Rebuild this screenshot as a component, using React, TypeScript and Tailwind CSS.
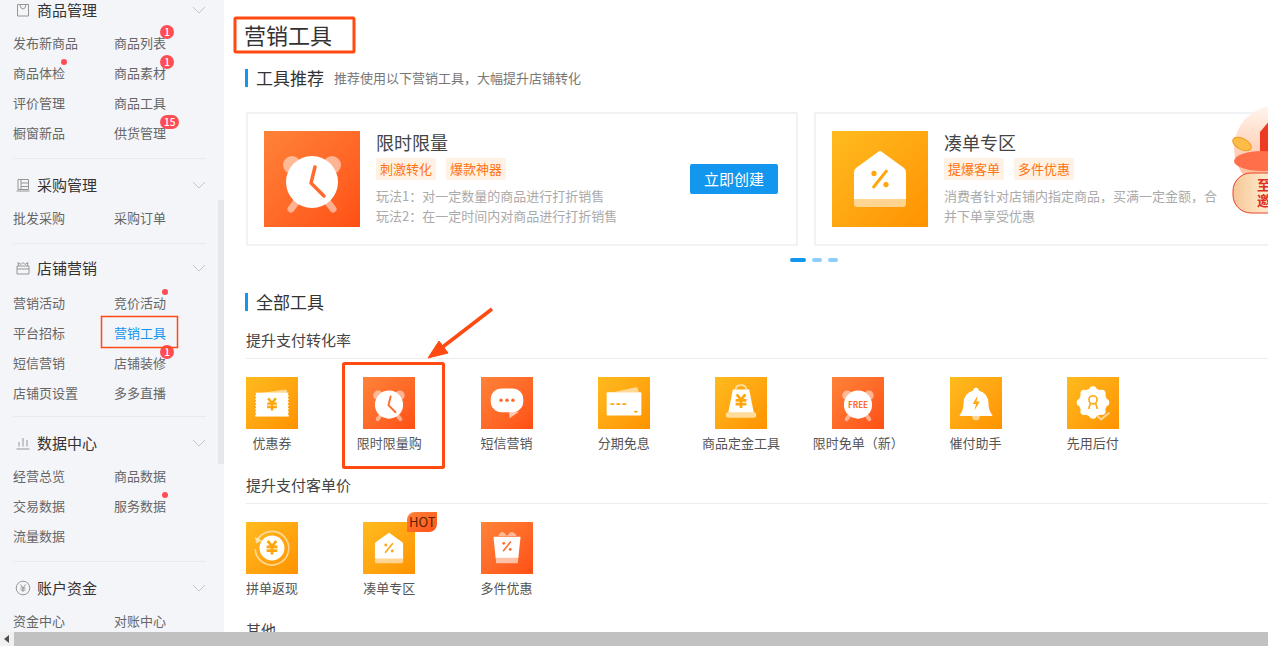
const RED_TILE = "bg-linear-to-br from-[#ff8238] to-[#ff4f14]";
const YELLOW_TILE = "bg-linear-to-br from-[#ffbb1e] to-[#ff9200]";
const RED = "#ff6a2d";
const YELLOW = "#ffa60e";
const PALE = "#ffffff";

type Mark = { badge?: string; dot?: boolean };
type NavItem = Mark & { label: string; active?: boolean };

function Yen({ cx, cy, s, color }: { cx: number; cy: number; s: number; color: string }) {
  return (
    <path
      d={`M${cx - s * 0.8} ${cy - s * 1.2}L${cx} ${cy - s * 0.2}L${cx + s * 0.8} ${cy - s * 1.2}M${cx - s} ${cy - s * 0.1}H${cx + s}M${cx - s} ${cy + s * 0.6}H${cx + s}M${cx} ${cy - s * 0.1}V${cy + s * 1.3}`}
      fill="none"
      stroke={color}
      strokeWidth={s * 0.5}
    />
  );
}

function Percent({ x, y, s, color }: { x: number; y: number; s: number; color: string }) {
  return (
    <g fill={color}>
      <path d={`M${x + s * 0.8} ${y - s}L${x - s * 0.8} ${y + s}`} stroke={color} strokeWidth={s * 0.36} strokeLinecap="round" />
      <circle cx={x - s * 0.75} cy={y - s * 0.7} r={s * 0.33} />
      <circle cx={x + s * 0.75} cy={y + s * 0.7} r={s * 0.33} />
    </g>
  );
}

function Clock({ free }: { free?: boolean }) {
  return (
    <>
      <circle cx="28" cy="34" r="9" fill={PALE} opacity=".5" />
      <circle cx="68" cy="34" r="9" fill={PALE} opacity=".5" />
      <path d="M33 70L27 78M63 70L69 78" stroke={PALE} strokeOpacity=".5" strokeWidth="7" strokeLinecap="round" />
      <circle cx="48" cy="51" r="26" fill={PALE} />
      {free ? (
        <text x="48" y="57" textAnchor="middle" fontSize="16" fontWeight="700" textLength="37" lengthAdjust="spacingAndGlyphs" fill={RED}>FREE</text>
      ) : (
        <path d="M51 36L47 52L60 65" fill="none" stroke={RED} strokeWidth="3.5" strokeLinecap="round" strokeLinejoin="round" />
      )}
    </>
  );
}

function House() {
  return (
    <>
      <path d="M46 21Q48 19 50 21L72 37Q74 39 74 41V68H22V41Q22 39 24 37Z" fill={PALE} />
      <path d="M22 68H74V73Q74 76 71 76H25Q22 76 22 73Z" fill={PALE} opacity=".55" />
      <Percent x={48} y={48} s={8} color={YELLOW} />
    </>
  );
}

function Ticket() {
  return (
    <>
      <path d="M24 30L72 23Q76 23 76 27V34H24Z" fill={PALE} opacity=".55" />
      <rect x="17" y="29" width="62" height="44" fill={PALE} />
      {[32, 38, 44, 50, 56, 62, 68].flatMap((y) => [
        <circle key={`l${y}`} cx="17" cy={y} r="1.8" fill="#ffa80f" />,
        <circle key={`r${y}`} cx="79" cy={y} r="1.8" fill="#ffa10a" />,
      ])}
      <Yen cx={48} cy={50} s={9} color={YELLOW} />
    </>
  );
}

function Chat() {
  return (
    <>
      <path d="M52 64H70L53 76Z" fill={PALE} opacity=".65" />
      <rect x="18" y="21" width="60" height="44" rx="20" fill={PALE} />
      <circle cx="37" cy="43" r="3.2" fill={RED} />
      <circle cx="48" cy="43" r="3.2" fill={RED} />
      <circle cx="59" cy="43" r="3.2" fill={RED} />
    </>
  );
}

function BankCard() {
  return (
    <>
      <path d="M28 28L70 19Q73 19 74 22L75 28Z" fill={PALE} opacity=".55" />
      <rect x="16" y="28" width="64" height="43" rx="2" fill={PALE} />
      <path d="M23 50H30M34 50H41M45 50H52" stroke={YELLOW} strokeWidth="3" />
      <ellipse cx="70" cy="64" rx="3.5" ry="1.8" fill={YELLOW} />
    </>
  );
}

function Bag() {
  return (
    <>
      <path d="M38 24Q38 15 48 15Q58 15 58 24" fill="none" stroke={PALE} strokeOpacity=".6" strokeWidth="3" />
      <path d="M33 23H63L72 68H24Z" fill={PALE} />
      <rect x="20" y="65" width="56" height="10" rx="4" fill="#ffdc9a" />
      <Yen cx={48} cy={44} s={10} color={YELLOW} />
    </>
  );
}

function Bell() {
  return (
    <>
      <circle cx="48" cy="73" r="7" fill={PALE} opacity=".55" />
      <path d="M48 20Q53 20 53 25Q70 30 71 48Q71 62 78 70V72H18V70Q25 62 25 48Q26 30 43 25Q43 20 48 20Z" fill={PALE} />
      <path d="M51 34L42 50H48L45 62L55 45H49Z" fill={YELLOW} />
    </>
  );
}

function Seal() {
  const spots = [0, 45, 90, 135, 180, 225, 270, 315];
  return (
    <>
      <circle cx="48" cy="47" r="26" fill={PALE} />
      {spots.map((a) => (
        <circle key={a} cx={48 + 23 * Math.cos((a * Math.PI) / 180)} cy={47 + 23 * Math.sin((a * Math.PI) / 180)} r="7" fill={PALE} />
      ))}
      <circle cx="48" cy="42" r="7.5" fill="none" stroke={YELLOW} strokeWidth="3" />
      <path d="M43 49L40 59M53 49L56 59" stroke={YELLOW} strokeWidth="3" />
      <path d="M56 72L63 78L78 66" fill="none" stroke="#ffd78f" strokeWidth="4" />
    </>
  );
}

function Refund() {
  return (
    <>
      <path d="M20 35A31 31 0 1 1 17 50" fill="none" stroke={PALE} strokeOpacity=".55" strokeWidth="3" />
      <path d="M16 27L19 40L30 34Z" fill={PALE} fillOpacity=".55" />
      <circle cx="48" cy="48" r="23" fill={PALE} />
      <Yen cx={48} cy={47} s={10} color={YELLOW} />
    </>
  );
}

function Box() {
  return (
    <>
      <path d="M32 26Q36 16 42 19L48 26L54 19Q60 16 66 26Z" fill={PALE} opacity=".5" />
      <path d="M23 27H73L69 66H27Z" fill={PALE} />
      <path d="M27 64H69L68 76H28Z" fill={PALE} opacity=".6" />
      <Percent x={48} y={45} s={8} color={RED} />
    </>
  );
}

function Tile({ tone, size, children }: { tone: string; size: string; children: React.ReactNode }) {
  return (
    <div className={`${size} ${tone} shrink-0`}>
      <svg viewBox="0 0 96 96" className="block h-full w-full">{children}</svg>
    </div>
  );
}

function Tool({ label, tone, art, hot }: { label: string; tone: string; art: React.ReactNode; hot?: boolean }) {
  return (
    <div className="relative flex w-13 flex-col items-center">
      <Tile tone={tone} size="size-13">{art}</Tile>
      {hot && (
        <span className="absolute -top-2.5 left-11 flex h-5 w-7.5 items-center justify-center rounded-tl-lg rounded-br-lg bg-linear-to-br from-[#ff8238] to-[#ff4f14] text-[13px] text-[#5c1f00]">
          HOT
        </span>
      )}
      <span className="mt-1 whitespace-nowrap text-[13px] leading-5 text-[#555]">{label}</span>
    </div>
  );
}

function NavLink({ label, active, badge, dot }: NavItem) {
  return (
    <div className="flex h-7.5 items-center">
      <span className={`relative leading-5 ${active ? "text-[#1296ee]" : "text-[#666]"}`}>
        {label}
        {badge && (
          <span className="absolute -top-2 left-11.5 flex h-3.5 min-w-3.5 items-center justify-center rounded-full bg-[#ff4d55] px-1 text-[10px] font-medium text-white">
            {badge}
          </span>
        )}
        {dot && <span className="absolute -top-1 left-12 size-1.5 rounded-full bg-[#ff4d55]" />}
      </span>
    </div>
  );
}

function NavSection({ title, icon, items, pad, first, tight }: { title: string; icon: React.ReactNode; items: NavItem[]; pad: string; first?: boolean; tight?: boolean }) {
  return (
    <section className={`ml-3.25 mr-4.5 ${tight ? "pt-3" : "pt-3.5"} ${pad} ${first ? "" : "border-t border-[#e9eaee]"}`}>
      <div className="flex h-6 items-center gap-1.5 pl-0.5">
        <svg viewBox="0 0 16 16" className="size-4 text-[#969696]" fill="none" stroke="currentColor" strokeWidth="1">{icon}</svg>
        <span className="text-[15px] text-[#333]">{title}</span>
        <svg viewBox="0 0 14 8" className="ml-auto h-2 w-3.5 text-[#c4c6cb]" fill="none" stroke="currentColor"><path d="M1 1L7 7L13 1" /></svg>
      </div>
      <div className={`${tight ? "mt-2" : "mt-1.5"} grid w-50.5 grid-cols-2`}>
        {items.map((item) => <NavLink key={item.label} {...item} />)}
      </div>
    </section>
  );
}

function Sidebar() {
  return (
    <aside className="relative w-56 shrink-0 overflow-hidden bg-[#f4f5f9] text-[13px]">
      <div className="-mt-4">
        <NavSection
          first
          title="商品管理"
          pad="pb-2.5"
          icon={<path d="M2.5 2.5H13.5V14H2.5ZM5 2.5Q5.5 7 8 7Q10.5 7 11 2.5" />}
          items={[
            { label: "发布新商品" },
            { label: "商品列表", badge: "1" },
            { label: "商品体检", dot: true },
            { label: "商品素材", badge: "1" },
            { label: "评价管理" },
            { label: "商品工具" },
            { label: "橱窗新品" },
            { label: "供货管理", badge: "15" },
          ]}
        />
        <NavSection
          title="采购管理"
          pad="pb-2.5"
          icon={<path d="M3 2.5H13.5V12.5H3ZM1.5 14H14.5M6 2.5V12.5M6 6H13.5M6 9.5H13.5" />}
          items={[{ label: "批发采购" }, { label: "采购订单" }]}
        />
        <NavSection
          tight
          title="店铺营销"
          pad="pb-2"
          icon={<path d="M2 6H14V14H2ZM2 9H14M3.5 6L3 2.5L6 4.5L8 2.5L10 4.5L13 2.5L12.5 6" />}
          items={[
            { label: "营销活动" },
            { label: "竞价活动", dot: true },
            { label: "平台招标" },
            { label: "营销工具", active: true },
            { label: "短信营销" },
            { label: "店铺装修", badge: "1" },
            { label: "店铺页设置" },
            { label: "多多直播" },
          ]}
        />
        <NavSection
          title="数据中心"
          pad="pb-2.5"
          icon={<path d="M1.5 14H14.5M4 11.5V7M8 11.5V3M12 11.5V5" />}
          items={[
            { label: "经营总览" },
            { label: "商品数据" },
            { label: "交易数据" },
            { label: "服务数据", dot: true },
            { label: "流量数据" },
          ]}
        />
        <NavSection
          title="账户资金"
          pad="pb-2.5"
          icon={<><circle cx="8" cy="8" r="6.8" /><path d="M5.5 4.5L8 8L10.5 4.5M5.5 8H10.5M5.5 10H10.5M8 8V12" /></>}
          items={[{ label: "资金中心" }, { label: "对账中心" }]}
        />
      </div>
      <div className="absolute right-0 top-50 h-66 w-1.5 bg-[#e6e7eb]" />
    </aside>
  );
}

function Heading({ title, sub }: { title: string; sub?: string }) {
  return (
    <div className="-ml-px flex h-6 items-center">
      <span className="h-4.5 border-l-3 border-[#1296ee]" />
      <h2 className="ml-2 text-[17px] text-[#333]">{title}</h2>
      {sub && <span className="ml-2.5 text-[13px] text-[#777]">{sub}</span>}
    </div>
  );
}

function Tag({ children }: { children: React.ReactNode }) {
  return <span className="flex h-5.5 items-center rounded-xs bg-[#fff1e3] px-1 text-[13px] text-[#ff7410]">{children}</span>;
}

function PromoCard({ title, tags, lines, tone, art, action }: { title: string; tags: string[]; lines: string[]; tone: string; art: React.ReactNode; action?: boolean }) {
  return (
    <div className="flex h-33.5 w-138 shrink-0 items-center border-2 border-[#f1f2f4] pl-4 pr-4.5">
      <Tile tone={tone} size="size-24">{art}</Tile>
      <div className="ml-4 flex w-70 flex-col items-start self-start pt-4">
        <h3 className="text-lg leading-6 text-[#444]">{title}</h3>
        <div className="mt-1 flex gap-2.5">
          {tags.map((t) => <Tag key={t}>{t}</Tag>)}
        </div>
        <div className="mt-1.5 text-[13px] leading-5 text-[#aaa]">
          {lines.map((l) => <p key={l}>{l}</p>)}
        </div>
      </div>
      {action && (
        <button className="ml-auto h-7.5 w-22 rounded-xs bg-[#1296ee] text-[15px] text-white">立即创建</button>
      )}
    </div>
  );
}

function GroupTitle({ children, className }: { children: React.ReactNode; className: string }) {
  return <h3 className={`border-b border-[#ececec] pb-1.5 text-[15px] leading-6 text-[#444] ${className}`}>{children}</h3>;
}

function Promo() {
  return (
    <svg viewBox="0 0 36 116" className="absolute right-0 top-25 h-29 w-9 overflow-hidden">
      <defs>
        <linearGradient id="bubble" x1="0" y1="0" x2="0" y2="1">
          <stop offset="0" stopColor="#fff6ef" />
          <stop offset="1" stopColor="#ffb089" />
        </linearGradient>
        <linearGradient id="pill" x1="0" y1="0" x2="1" y2="0">
          <stop offset="0" stopColor="#f7c595" />
          <stop offset=".5" stopColor="#fde7c8" />
        </linearGradient>
      </defs>
      <circle cx="45" cy="48" r="43" fill="url(#bubble)" />
      <path d="M28 32L38 20V70H28Z" fill="#ee3a22" />
      <ellipse cx="30" cy="61" rx="28" ry="10" fill="#ff6f4a" />
      <ellipse cx="10" cy="44" rx="10" ry="5.5" transform="rotate(28 10 44)" fill="#fbbd45" stroke="#f09a1f" />
      <rect x="1" y="73" width="60" height="40" rx="18" fill="url(#pill)" stroke="#e8432a" />
      <text x="25" y="90" fontSize="14" fontWeight="700" fill="#e02e20">至</text>
      <text x="25" y="106" fontSize="14" fontWeight="700" fill="#e02e20">邀</text>
    </svg>
  );
}

function Annotations() {
  return (
    <svg viewBox="0 0 1268 646" className="pointer-events-none absolute inset-0 h-full w-full" fill="none" stroke="#ff4a12">
      <rect x="235" y="18" width="119" height="34" rx="1" strokeWidth="3" />
      <rect x="101.5" y="316.5" width="76" height="31" strokeWidth="1.5" />
      <rect x="343.5" y="363.5" width="100" height="104" rx="1" strokeWidth="3" />
      <path d="M492 309L440 349" strokeWidth="3.5" />
      <path d="M428 358L439 341L448 353Z" fill="#ff4a12" strokeWidth="1" />
    </svg>
  );
}

export default function App() {
  return (
    <div className="relative flex h-screen w-full flex-col overflow-hidden bg-white font-['Noto_Sans_CJK_SC',sans-serif]">
      <div className="flex min-h-0 flex-1">
        <Sidebar />
        <main className="relative min-w-0 flex-1 overflow-hidden pl-5.5">
          <h1 className="-ml-0.5 mt-4 text-[22px] leading-9 text-[#333]">营销工具</h1>
          <div className="mt-3.5">
            <Heading title="工具推荐" sub={"推荐使用以下营销工具\uFF0C大幅提升店铺转化"} />
          </div>
          <div className="mt-5.5 flex gap-4">
            <PromoCard
              action
              title="限时限量"
              tags={["刺激转化", "爆款神器"]}
              lines={["玩法1\uFF1A对一定数量的商品进行打折销售", "玩法2\uFF1A在一定时间内对商品进行打折销售"]}
              tone={RED_TILE}
              art={<Clock />}
            />
            <PromoCard
              title="凑单专区"
              tags={["提爆客单", "多件优惠"]}
              lines={["消费者针对店铺内指定商品\uFF0C买满一定金额\uFF0C合并下单享受优惠"]}
              tone={YELLOW_TILE}
              art={<House />}
            />
          </div>
          <div className="mt-3 flex w-284 justify-center gap-1.5">
            <span className="h-1 w-4 rounded-full bg-[#1296ee]" />
            <span className="h-1 w-2.5 rounded-full bg-[#8dcff8]" />
            <span className="h-1 w-2.5 rounded-full bg-[#8dcff8]" />
          </div>
          <div className="mt-7">
            <Heading title="全部工具" />
          </div>
          <GroupTitle className="mt-3.5">提升支付转化率</GroupTitle>
          <div className="mt-4.5 grid w-234.5 grid-cols-8">
            <Tool label="优惠券" tone={YELLOW_TILE} art={<Ticket />} />
            <Tool label="限时限量购" tone={RED_TILE} art={<Clock />} />
            <Tool label="短信营销" tone={RED_TILE} art={<Chat />} />
            <Tool label="分期免息" tone={YELLOW_TILE} art={<BankCard />} />
            <Tool label="商品定金工具" tone={YELLOW_TILE} art={<Bag />} />
            <Tool label={"限时免单\uFF08新\uFF09"} tone={RED_TILE} art={<Clock free />} />
            <Tool label="催付助手" tone={YELLOW_TILE} art={<Bell />} />
            <Tool label="先用后付" tone={YELLOW_TILE} art={<Seal />} />
          </div>
          <GroupTitle className="mt-5">提升支付客单价</GroupTitle>
          <div className="mt-4.5 grid w-234.5 grid-cols-8">
            <Tool label="拼单返现" tone={YELLOW_TILE} art={<Refund />} />
            <Tool label="凑单专区" tone={YELLOW_TILE} art={<House />} hot />
            <Tool label="多件优惠" tone={RED_TILE} art={<Box />} />
          </div>
          <GroupTitle className="mt-5">其他</GroupTitle>
          <Promo />
        </main>
      </div>
      <div className="flex h-3.5 shrink-0 bg-[#f1f1f1]">
        <div className="flex w-3.5 items-center justify-center">
          <svg viewBox="0 0 6 8" className="h-2 w-1.5 text-[#505050]"><path d="M5 0V8L0 4Z" fill="currentColor" /></svg>
        </div>
        <div className="flex-1 bg-[#c1c1c1]" />
      </div>
      <Annotations />
    </div>
  );
}
